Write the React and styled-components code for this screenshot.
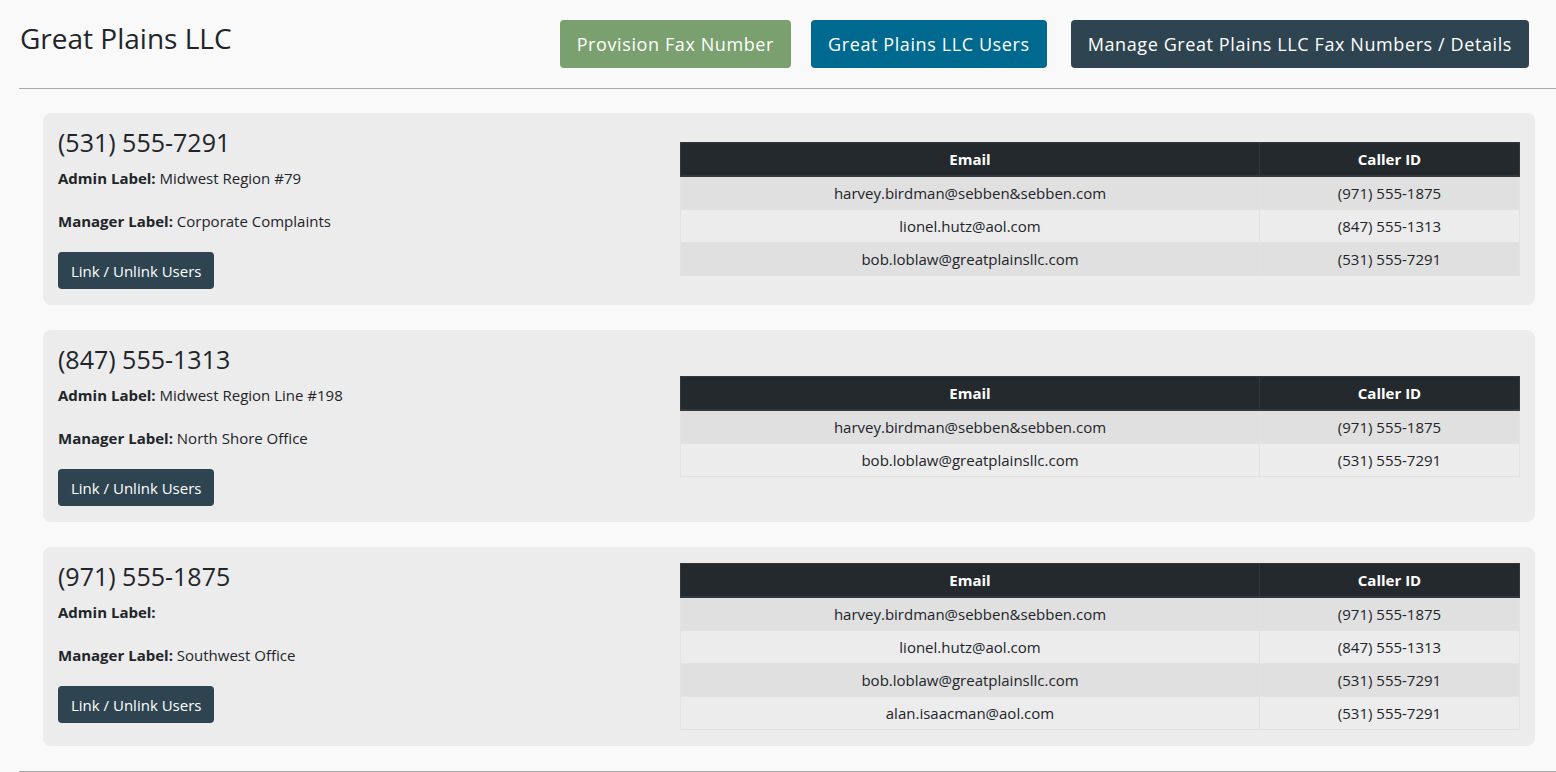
import React from "react";
import styled, { createGlobalStyle } from "styled-components";

const faxNumbers = [
  {
    number: "(531) 555-7291",
    adminLabel: "Midwest Region #79",
    managerLabel: "Corporate Complaints",
    users: [
      { email: "harvey.birdman@sebben&sebben.com", callerId: "(971) 555-1875" },
      { email: "lionel.hutz@aol.com", callerId: "(847) 555-1313" },
      { email: "bob.loblaw@greatplainsllc.com", callerId: "(531) 555-7291" },
    ],
  },
  {
    number: "(847) 555-1313",
    adminLabel: "Midwest Region Line #198",
    managerLabel: "North Shore Office",
    users: [
      { email: "harvey.birdman@sebben&sebben.com", callerId: "(971) 555-1875" },
      { email: "bob.loblaw@greatplainsllc.com", callerId: "(531) 555-7291" },
    ],
  },
  {
    number: "(971) 555-1875",
    adminLabel: "",
    managerLabel: "Southwest Office",
    users: [
      { email: "harvey.birdman@sebben&sebben.com", callerId: "(971) 555-1875" },
      { email: "lionel.hutz@aol.com", callerId: "(847) 555-1313" },
      { email: "bob.loblaw@greatplainsllc.com", callerId: "(531) 555-7291" },
      { email: "alan.isaacman@aol.com", callerId: "(531) 555-7291" },
    ],
  },
];

export default function App() {
  return (
    <Page>
      <GlobalStyle />
      <Header>
        <Title>Great Plains LLC</Title>
        <Actions>
          <HeaderButton variant="green">Provision Fax Number</HeaderButton>
          <HeaderButton variant="blue">Great Plains LLC Users</HeaderButton>
          <HeaderButton variant="dark">
            Manage Great Plains LLC Fax Numbers / Details
          </HeaderButton>
        </Actions>
      </Header>
      <Rule />
      <CardList>
        {faxNumbers.map((fax) => (
          <Card key={fax.number}>
            <Info>
              <Number>{fax.number}</Number>
              <Label>
                <b>Admin Label:</b> {fax.adminLabel}
              </Label>
              <Label>
                <b>Manager Label:</b> {fax.managerLabel}
              </Label>
              <LinkButton>Link / Unlink Users</LinkButton>
            </Info>
            <Table>
              <thead>
                <tr>
                  <Th>Email</Th>
                  <Th>Caller ID</Th>
                </tr>
              </thead>
              <tbody>
                {fax.users.map((user, index) => (
                  <Row key={index} striped={index % 2 === 0}>
                    <Td>{user.email}</Td>
                    <Td>{user.callerId}</Td>
                  </Row>
                ))}
              </tbody>
            </Table>
          </Card>
        ))}
      </CardList>
      <Rule />
    </Page>
  );
}

const GlobalStyle = createGlobalStyle`
  body {
    margin: 0;
    background: #f9f9f9;
    font-family: "Open Sans", "Noto Sans", sans-serif;
    color: #212529;
  }
`;
const Page = styled.div`
  width: 1556px;
`;
const Header = styled.div`
  display: flex;
  align-items: center;
  justify-content: space-between;
  padding: 20px 27px 20px 20px;
`;
const Title = styled.h1`
  margin: 0;
  font-size: 28px;
  font-weight: 400;
  line-height: 1.2;
  align-self: flex-start;
  padding-top: 2px;
`;
const Actions = styled.div`
  display: flex;
  gap: 20px;
  & > :last-child {
    margin-left: 4px;
  }
`;
const buttonColors = {
  green: "#7ba06f",
  blue: "#00698f",
  dark: "#2f4451",
};
const HeaderButton = styled.button`
  height: 48px;
  padding: 0 17px;
  border: none;
  border-radius: 4px;
  background: ${(p) => buttonColors[p.variant]};
  color: #fff;
  font-family: inherit;
  font-size: 18px;
  letter-spacing: 0.6px;
  cursor: pointer;
`;
const Rule = styled.hr`
  margin: 0 0 0 19px;
  border: none;
  border-top: 1px solid #a8a8a8;
`;
const CardList = styled.div`
  display: flex;
  flex-direction: column;
  gap: 25px;
  padding: 24px 21px 25px 43px;
`;
const Card = styled.div`
  display: grid;
  grid-template-columns: 1fr 840px;
  column-gap: 15px;
  align-items: center;
  padding: 16px 15px;
  background: #ececec;
  border-radius: 8px;
`;
const Info = styled.div`
  align-self: start;
  display: flex;
  flex-direction: column;
  align-items: flex-start;
`;
const Number = styled.h4`
  margin: -2px 0 9px;
  font-size: 25px;
  font-weight: 400;
  line-height: 31px;
`;
const Label = styled.p`
  margin: 0 0 21px;
  font-size: 15px;
  line-height: 22px;
  b {
    font-weight: 700;
  }
  &:nth-of-type(2) {
    margin-bottom: 20px;
  }
`;
const LinkButton = styled.button`
  height: 37px;
  padding: 0 13px;
  border: none;
  border-radius: 4px;
  background: #2f4451;
  color: #fff;
  font-family: inherit;
  font-size: 15px;
  cursor: pointer;
`;
const Table = styled.table`
  width: 840px;
  border-collapse: collapse;
  font-size: 15px;
  text-align: center;
  th:first-child,
  td:first-child {
    width: 562px;
  }
`;
const Th = styled.th`
  height: 32px;
  padding: 0 8px;
  background: #24292d;
  color: #fff;
  font-weight: 700;
  border: 1px solid #32383e;
  border-bottom: 2px solid #32383e;
`;
const Row = styled.tr`
  background: ${(p) => (p.striped ? "#e0e0e0" : "#ececec")};
`;
const Td = styled.td`
  height: 32px;
  padding: 0 8px;
  border: 1px solid #e2e2e2;
`;
